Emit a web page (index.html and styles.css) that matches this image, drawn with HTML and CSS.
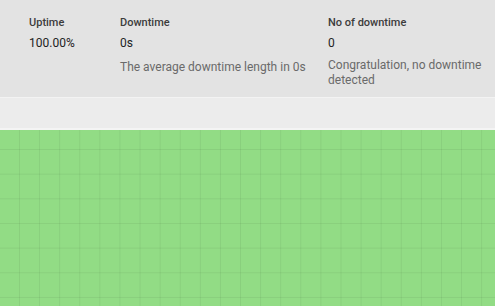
FILE: index.html
```html
<!DOCTYPE html>
<html lang="en">
<head>
<meta charset="utf-8">
<title>Uptime</title>
<link rel="stylesheet" href="styles.css">
</head>
<body>
  <section class="stats">
    <div class="stat stat-uptime">
      <div class="stat-label">Uptime</div>
      <div class="stat-value">100.00%</div>
    </div>
    <div class="stat stat-downtime">
      <div class="stat-label">Downtime</div>
      <div class="stat-value">0s</div>
      <div class="stat-desc desc-downtime">The average downtime length in 0s</div>
    </div>
    <div class="stat stat-count">
      <div class="stat-label">No of downtime</div>
      <div class="stat-value">0</div>
      <div class="stat-desc">Congratulation, no downtime detected</div>
    </div>
  </section>
  <div class="band"></div>
  <div class="chart"></div>
</body>
</html>
```

FILE: styles.css
```css
html, body {
  margin: 0;
  padding: 0;
}
body {
  width: 495px;
  height: 306px;
  overflow: hidden;
  font-family: Roboto, "Liberation Sans", Arial, sans-serif;
  background: #ececec;
  display: flex;
  flex-direction: column;
}
.stats {
  box-sizing: border-box;
  height: 98px;
  background: #e3e3e3;
  border-bottom: 1px solid #f3f3f3;
  padding: 16px 0 0 29px;
  display: flex;
}
.stat-uptime { width: 91px; }
.stat-downtime { width: 208px; }
.stat-count { width: 160px; }
.stat-label {
  font-size: 11px;
  line-height: 13px;
  font-weight: 500;
  color: #3c3c3c;
}
.stat-value {
  margin-top: 6px;
  font-size: 12px;
  line-height: 16px;
  color: #222;
}
.stat-desc {
  margin-top: 7px;
  font-size: 12px;
  line-height: 15px;
  color: #6a6a6a;
}
.desc-downtime {
  margin-top: 9px;
}
.band {
  height: 32px;
  background: #ececec;
  border-bottom: 2px solid #f4f4f4;
  box-sizing: border-box;
}
.chart {
  flex: 1;
  background-color: #92dc85;
  background-image:
    linear-gradient(to right, rgba(0,0,0,0.06) 1px, transparent 1px),
    linear-gradient(to bottom, rgba(0,0,0,0.06) 1px, transparent 1px);
  background-size: 20.1px 24.67px;
  background-position: 19px 19px;
}
```
